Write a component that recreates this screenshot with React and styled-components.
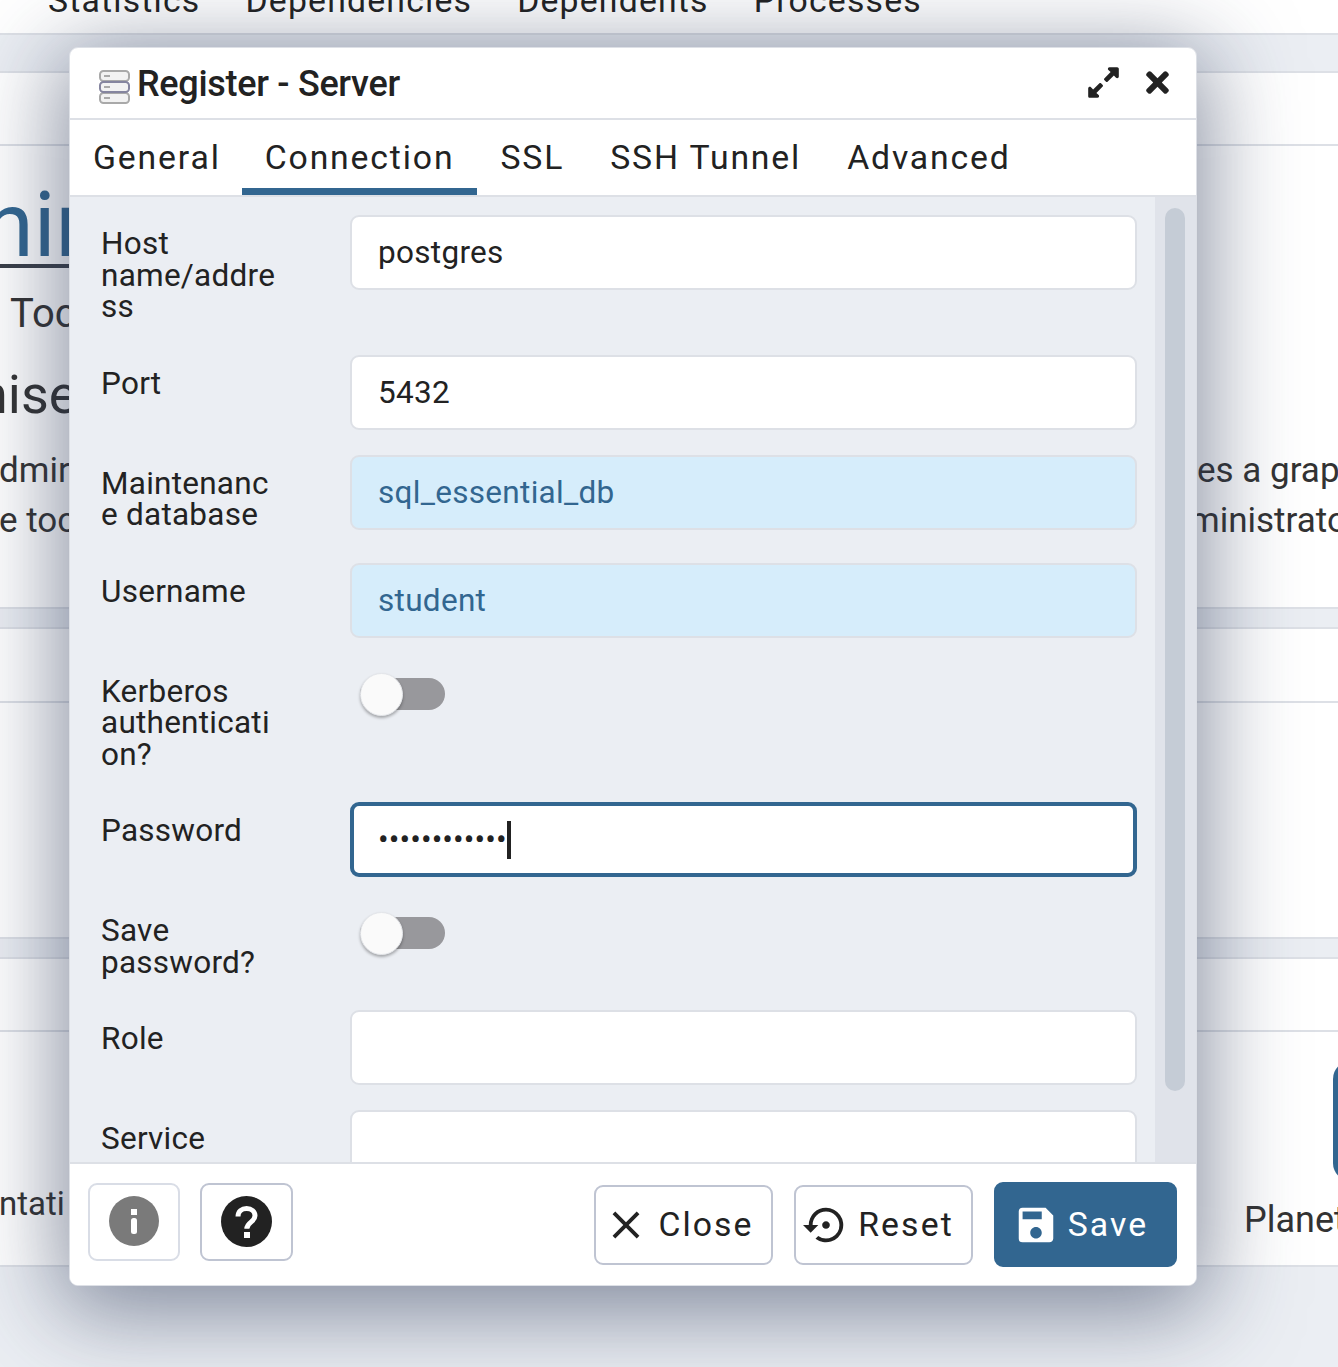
import styled, { createGlobalStyle } from "styled-components";
import { FaExpandAlt, FaTimes } from "react-icons/fa";
import { MdClose, MdSave, MdSettingsBackupRestore } from "react-icons/md";

const GlobalStyle = createGlobalStyle`
  html, body {
    margin: 0;
    padding: 0;
    height: 1367px;
    overflow: hidden;
    background: #ebeef3;
    font-family: Roboto, "Liberation Sans", sans-serif;
    color: #222;
  }
  * { box-sizing: border-box; }
`;

const Page = styled.div`
  position: relative;
  width: 1338px;
  height: 1367px;
  overflow: hidden;
`;

const NavBar = styled.div`
  height: 35px;
  background: #fff;
  border-bottom: 2px solid #dde0e6;
  display: flex;
  gap: 45px;
  padding-left: 48px;
  overflow: hidden;
`;

const NavItem = styled.span`
  font-size: 33.75px;
  line-height: 36px;
  letter-spacing: 1.2px;
  margin-top: -17px;
  white-space: nowrap;
`;

const Panel = styled.section`
  margin-top: ${(p) => p.$top}px;
  background: #fff;
  border-top: 2px solid #dde0e6;
  border-bottom: 2px solid #dde0e6;
`;

const PanelHeader = styled.div`
  height: ${(p) => p.$height}px;
  border-bottom: 2px solid #dde0e6;
`;

const PanelBody = styled.div`
  height: ${(p) => p.$height}px;
  position: relative;
  overflow: hidden;
`;

const BrandRow = styled.div`
  width: 400px;
  height: 122px;
  border-bottom: 4px solid #3a3f48;
  color: #326690;
  font-size: 90px;
  line-height: 160px;
  margin-left: -16px;
  white-space: nowrap;
`;

const SideRow = styled.div`
  display: flex;
  justify-content: space-between;
  white-space: nowrap;
  height: ${(p) => p.$height}px;
  font-size: ${(p) => p.$size}px;
  line-height: ${(p) => p.$height}px;
  color: #333;
  margin-left: ${(p) => p.$indent || 0}px;
  margin-bottom: ${(p) => p.$after || 0}px;
`;

const RightClip = styled.span`
  width: 141px;
  overflow: hidden;
  text-indent: ${(p) => p.$shift || 0}px;
`;

const LinkColumns = styled.div`
  display: flex;
  justify-content: space-between;
  height: 100%;
`;

const LinkLeft = styled.div`
  font-size: 33px;
  color: #333;
  margin-left: -1px;
  padding-top: 152px;
  line-height: 40px;
  white-space: nowrap;
`;

const LinkRight = styled.div`
  width: 94px;
  padding-top: 29px;
  overflow: hidden;
  white-space: nowrap;
  font-size: 36px;
  color: #333;
`;

const BlueTile = styled.div`
  width: 60px;
  height: 120px;
  margin-left: 89px;
  margin-bottom: 18px;
  background: #326690;
  border-radius: 18px;
`;

const Dialog = styled.div`
  position: absolute;
  left: 69px;
  top: 47px;
  width: 1128px;
  height: 1239px;
  display: flex;
  flex-direction: column;
  background: #fff;
  border: 1px solid #dde0e6;
  border-radius: 9px;
  overflow: hidden;
  box-shadow: 0 16px 90px 10px rgba(40, 52, 84, 0.55);
`;

const TitleBar = styled.header`
  height: 72px;
  flex-shrink: 0;
  display: flex;
  align-items: center;
  padding: 3px 22px 0 29px;
  border-bottom: 2px solid #dde0e6;
`;

const IconSlot = styled.span`
  display: flex;
  margin-top: 5px;
`;

const Title = styled.h1`
  margin: -2px 0 0 6px;
  flex: 1;
  font-size: 36px;
  font-weight: 500;
  letter-spacing: -0.3px;
  color: #222;
`;

const HeaderIcon = styled.span`
  display: flex;
  margin-top: -5px;
  font-size: ${(p) => p.$size}px;
  margin-left: ${(p) => p.$gap || 0}px;
  color: #222;
`;

const TabBar = styled.nav`
  height: 77px;
  flex-shrink: 0;
  display: flex;
  border-bottom: 2px solid #dde0e6;
`;

const Tab = styled.div`
  height: 75px;
  padding: 0 23px;
  font-size: 33.75px;
  line-height: 75px;
  letter-spacing: 1.85px;
  color: #222;
  border-bottom: 7px solid ${(p) => (p.$active ? "#326690" : "transparent")};
  margin-bottom: -1px;
  white-space: nowrap;

  &:first-child {
    margin-left: -1px;
    padding: 0 21px 0 24px;
  }
`;

const Body = styled.div`
  flex: 1;
  min-height: 0;
  display: flex;
  background: #ebeef3;
`;

const Form = styled.form`
  flex: 1;
  padding: 18px 18px 0 31px;
  overflow: hidden;
`;

const Row = styled.div`
  display: flex;
  margin-bottom: 24.75px;
`;

const Label = styled.label`
  width: 180px;
  flex-shrink: 0;
  margin-right: 69px;
  padding: 13px 0 7.5px;
  font-size: 31.5px;
  line-height: 31.5px;
  letter-spacing: 0.25px;
  overflow-wrap: anywhere;
  color: #222;
`;

const Field = styled.div`
  flex: 1;
  height: 75px;
  display: flex;
  align-items: center;
  padding-left: 26px;
  font-size: 31.5px;
  letter-spacing: 0.3px;
  border-radius: 9px;
  border: 2px solid #dde0e6;
  background: #fff;
  color: #222;
`;

const ReadOnlyField = styled(Field)`
  background: #d6edfb;
  color: #326690;
`;

const FocusField = styled(Field)`
  padding-left: 24px;
  letter-spacing: 0.1px;
  border: 4px solid #326690;
`;

const Caret = styled.span`
  width: 4px;
  height: 38px;
  background: #222;
`;

const Toggle = styled.div`
  position: relative;
  width: 85px;
  height: 32px;
  margin: 15px 0 0 10px;
  background: #98989c;
  border-radius: 16px;
`;

const Thumb = styled.span`
  position: absolute;
  left: 0;
  top: -5px;
  width: 43px;
  height: 43px;
  border-radius: 50%;
  background: #fafafa;
  border: 1px solid #e4e6ea;
  box-shadow: 0 2px 3px rgba(0, 0, 0, 0.3);
`;

const ScrollTrack = styled.div`
  width: 41px;
  flex-shrink: 0;
  background: #e0e3ea;
  padding: 11px 11px 0 10px;
`;

const ScrollThumb = styled.div`
  height: 883px;
  background: #c5ccd6;
  border-radius: 10px;
`;

const Footer = styled.footer`
  height: 123px;
  flex-shrink: 0;
  display: flex;
  align-items: center;
  padding: 0 19px 0 18px;
  border-top: 2px solid #dde0e6;
  background: #fff;
`;

const IconButton = styled.button`
  width: ${(p) => (p.$disabled ? 92 : 93)}px;
  height: 78px;
  margin: -5px 20px 0 0;
  padding: 0 0 2px;
  display: flex;
  align-items: center;
  justify-content: center;
  background: #fff;
  border-radius: 9px;
  border: 2px solid ${(p) => (p.$disabled ? "#d9dde6" : "#bfc4d2")};
`;

const Spacer = styled.div`
  flex: 1;
`;

const Button = styled.button`
  height: 80px;
  width: 179px;
  margin: 0 21px 0 0;
  padding: 0 10px 0 0;
  display: flex;
  align-items: center;
  justify-content: center;
  gap: 9px;
  font-family: inherit;
  font-size: 33.75px;
  letter-spacing: 2.1px;
  background: #fff;
  color: #222;
  border: 2px solid #bfc4d2;
  border-radius: 9px;

  svg {
    font-size: 46px;
    flex-shrink: 0;
  }
`;

const SaveButton = styled(Button)`
  width: 183px;
  height: 85px;
  margin: 0;
  background: #326690;
  border-color: #326690;
  color: #fff;
`;

const ServerIcon = () => (
  <svg width="32" height="34" viewBox="0 0 32 34">
    <g fill="#f2f2f2" stroke="#a9a9a9" strokeWidth="2">
      <rect x="1" y="1" width="29" height="10" rx="3.5" />
      <rect x="1" y="23" width="29" height="10" rx="3.5" />
      <rect x="1" y="12" width="29" height="10" rx="3.5" stroke="#85859f" />
    </g>
    <g fill="#a9a9a9">
      <rect x="5" y="5" width="6" height="2" />
      <rect x="5" y="16" width="6" height="2" />
      <rect x="5" y="27" width="6" height="2" />
    </g>
  </svg>
);

const InfoIcon = () => (
  <svg width="50" height="50" viewBox="0 0 50 50">
    <circle cx="25" cy="25" r="25" fill="#7a7a7a" />
    <rect x="22" y="13" width="6" height="6" fill="#fff" />
    <rect x="22" y="22" width="6" height="16" rx="2.5" fill="#fff" />
  </svg>
);

const HelpIcon = () => (
  <svg width="51" height="51" viewBox="0 0 51 51">
    <circle cx="25.5" cy="25.5" r="25.5" fill="#222" />
    <path
      d="M17 20.5c0-5 3.8-8 8.6-8 4.9 0 8.4 3 8.4 7.3 0 6.4-8.2 6.3-8.2 13"
      fill="none"
      stroke="#fff"
      strokeWidth="5"
    />
    <rect x="23" y="36" width="6" height="6" fill="#fff" />
  </svg>
);

const tabs = ["General", "Connection", "SSL", "SSH Tunnel", "Advanced"];

const App = () => {
  return (
    <Page>
      <GlobalStyle />
      <NavBar>
        {["Statistics", "Dependencies", "Dependents", "Processes"].map((item) => (
          <NavItem key={item}>{item}</NavItem>
        ))}
      </NavBar>

      <Panel $top={36}>
        <PanelHeader $height={73} />
        <PanelBody $height={461}>
          <BrandRow>nin</BrandRow>
          <SideRow $height={92} $size={40} $indent={10}>Toc</SideRow>
          <SideRow $height={70} $size={54} $indent={-22} $after={16}>nise</SideRow>
          <SideRow $height={50} $size={35} $indent={-1}>
            <span>dmir</span>
            <RightClip>es a graphical</RightClip>
          </SideRow>
          <SideRow $height={50} $size={35} $indent={-1}>
            <span>e toc</span>
            <RightClip $shift={-8}>ministrator</RightClip>
          </SideRow>
        </PanelBody>
      </Panel>

      <Panel $top={18}>
        <PanelHeader $height={74} />
        <PanelBody $height={234} />
      </Panel>

      <Panel $top={18}>
        <PanelHeader $height={73} />
        <PanelBody $height={233}>
          <LinkColumns>
            <LinkLeft>ntati</LinkLeft>
            <LinkRight>
              <BlueTile />
              Planet PostgreSQL
            </LinkRight>
          </LinkColumns>
        </PanelBody>
      </Panel>

      <Dialog>
        <TitleBar>
          <IconSlot><ServerIcon /></IconSlot>
          <Title>Register - Server</Title>
          <HeaderIcon $size={35}><FaExpandAlt /></HeaderIcon>
          <HeaderIcon $size={33} $gap={20}><FaTimes /></HeaderIcon>
        </TitleBar>

        <TabBar>
          {tabs.map((tab) => (
            <Tab key={tab} $active={tab === "Connection"}>{tab}</Tab>
          ))}
        </TabBar>

        <Body>
          <Form>
            <Row>
              <Label>Host name/address</Label>
              <Field>postgres</Field>
            </Row>
            <Row>
              <Label>Port</Label>
              <Field>5432</Field>
            </Row>
            <Row>
              <Label>Maintenance database</Label>
              <ReadOnlyField>sql_essential_db</ReadOnlyField>
            </Row>
            <Row>
              <Label>Username</Label>
              <ReadOnlyField>student</ReadOnlyField>
            </Row>
            <Row>
              <Label>Kerberos authentication?</Label>
              <Toggle><Thumb /></Toggle>
            </Row>
            <Row>
              <Label>Password</Label>
              <FocusField>
                <span>••••••••••••</span>
                <Caret />
              </FocusField>
            </Row>
            <Row>
              <Label>Save password?</Label>
              <Toggle><Thumb /></Toggle>
            </Row>
            <Row>
              <Label>Role</Label>
              <Field />
            </Row>
            <Row>
              <Label>Service</Label>
              <Field />
            </Row>
          </Form>
          <ScrollTrack>
            <ScrollThumb />
          </ScrollTrack>
        </Body>

        <Footer>
          <IconButton $disabled><InfoIcon /></IconButton>
          <IconButton><HelpIcon /></IconButton>
          <Spacer />
          <Button><MdClose />Close</Button>
          <Button><MdSettingsBackupRestore />Reset</Button>
          <SaveButton><MdSave />Save</SaveButton>
        </Footer>
      </Dialog>
    </Page>
  );
};

export default App;
